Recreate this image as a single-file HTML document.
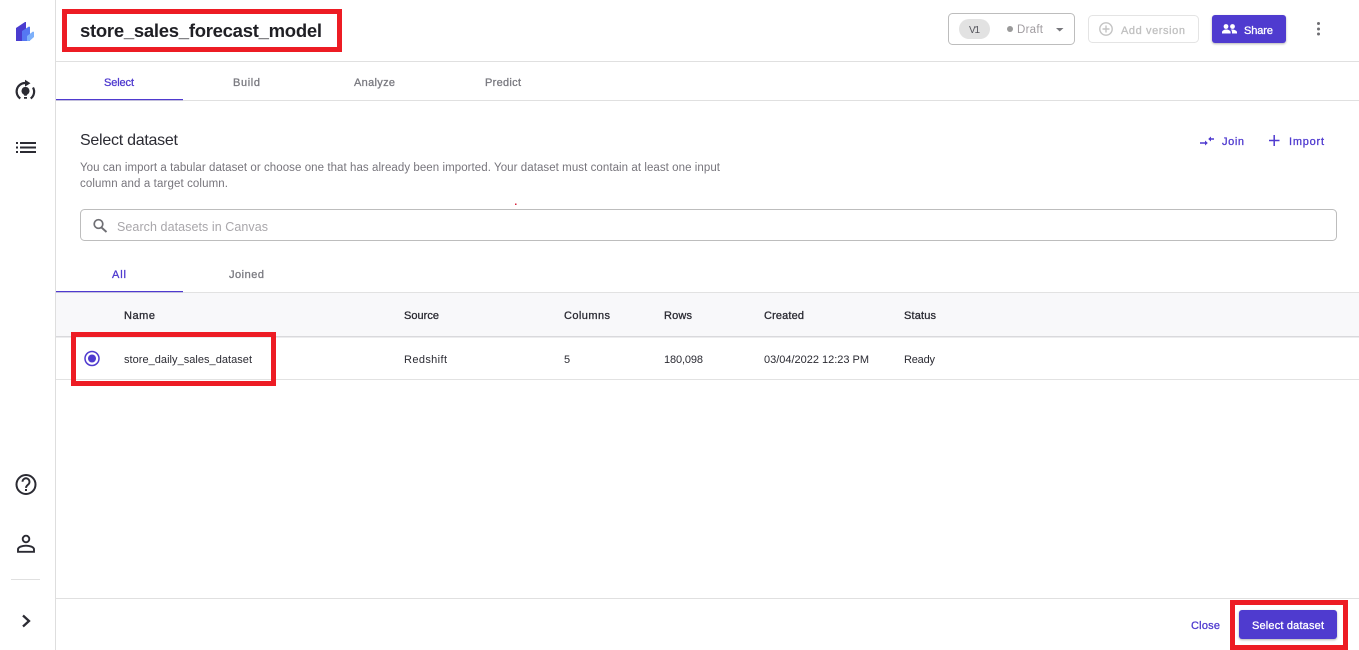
<!DOCTYPE html>
<html><head><meta charset="utf-8"><title>store_sales_forecast_model</title>
<style>
html,body{margin:0;padding:0;width:1359px;height:650px;overflow:hidden;background:#fff}
svg{display:block}
text{font-family:"Liberation Sans",sans-serif;font-size:11px;fill:#2b2b33}
.b{fill:#2b2b33;stroke:#2b2b33;stroke-width:.3px}
.p{fill:#4f3acf;stroke:#4f3acf;stroke-width:.3px}
.g{fill:#7a7a80;stroke:#7a7a80;stroke-width:.3px}
.w{fill:#fff;stroke:#fff;stroke-width:.3px}
.r{font-size:11.5px}
</style></head><body>
<svg width="1359" height="650" viewBox="0 0 1359 650" xmlns="http://www.w3.org/2000/svg">
<defs><filter id="s" x="-10%" y="-20%" width="120%" height="150%"><feDropShadow dx="0" dy="1" stdDeviation="1" flood-color="#000" flood-opacity=".3"/></filter></defs>
<rect width="1359" height="650" fill="#fff"/>
<!-- structure -->
<rect x="55" y="0" width="1" height="650" fill="#dedede"/>
<rect x="56" y="61" width="1303" height="1" fill="#e0e0e0"/>
<rect x="56" y="100" width="1303" height="1" fill="#e0e0e0"/>
<rect x="56" y="99" width="127" height="1.200" fill="#4f3acf"/>
<rect x="56" y="598" width="1303" height="1" fill="#e0e0e0"/>
<rect x="11" y="579" width="29" height="1" fill="#e0e0e0"/>
<!-- sidebar icons -->
<polygon points="16,28 25,22 26,22 26,41 16,41" fill="#4a3ccf"/>
<polygon points="22,31 29,26.500 30,27 30,41 22,41" fill="#5577f2"/>
<polygon points="27,36 33,31.500 34,32 34,37 29.500,41 27,41" fill="#7db0fa"/>
<g fill="none" stroke="#2b2b33" stroke-width="2.200">
<path d="M20.300 98.500A8.500 8.500 0 0 1 25 83"/>
<path d="M30.700 98.500A8.500 8.500 0 0 0 33 87.500"/>
</g>
<path d="M25 79.800l5.500 3.400L25 86.600z" fill="#2b2b33"/>
<path d="M25.500 87a3.900 3.900 0 0 1 2.300 7.100c-.6.500-1 1-1.100 1.700h-2.400c-.1-.7-.5-1.200-1.100-1.700a3.900 3.900 0 0 1 2.300-7.100zM24 97h3v1.800h-3z" fill="#2b2b33"/>
<g fill="#2b2b33">
<rect x="16" y="142" width="2" height="2"/><rect x="20" y="142" width="16" height="2"/>
<rect x="16" y="146.500" width="2" height="2"/><rect x="20" y="146.500" width="16" height="2"/>
<rect x="16" y="151" width="2" height="2"/><rect x="20" y="151" width="16" height="2"/>
</g>
<circle cx="26" cy="484.500" r="9.500" fill="none" stroke="#2b2b33" stroke-width="2"/>
<path d="M22.500 481.800a3.500 3.500 0 1 1 5.600 2.800c-1.300 1-2.100 1.600-2.100 3.300" fill="none" stroke="#2b2b33" stroke-width="1.900"/>
<rect x="25" y="489" width="2" height="2" fill="#2b2b33"/>
<circle cx="26" cy="539" r="3.300" fill="none" stroke="#2b2b33" stroke-width="1.900"/>
<path d="M18 551.800v-2.300c0-2.800 4.800-3.800 8-3.800s8 1 8 3.800v2.300z" fill="none" stroke="#2b2b33" stroke-width="1.900"/>
<path d="M23 615.500l6 5.500-6 5.500" fill="none" stroke="#2b2b33" stroke-width="2.300"/>
<!-- title -->
<text x="80" y="37" style="font-size:18.500px;font-weight:bold;fill:#1f1f24" textLength="242" lengthAdjust="spacing">store_sales_forecast_model</text>
<!-- header right -->
<rect x="948.500" y="13.500" width="126" height="31" rx="4" fill="#fff" stroke="#bdbdbd"/>
<rect x="959" y="19" width="31" height="20" rx="10" fill="#e2e2e2"/>
<text x="969" y="33" style="font-size:10px;fill:#55555c" textLength="11" lengthAdjust="spacing">V1</text>
<circle cx="1010" cy="29" r="3" fill="#9a9a9a"/>
<text x="1017" y="33" class="r" style="fill:#a09ca0" textLength="26" lengthAdjust="spacing">Draft</text>
<polygon points="1056,28 1063.500,28 1059.700,31.500" fill="#77777c"/>
<rect x="1088.500" y="15.500" width="110" height="27" rx="4" fill="#fff" stroke="#e4e4e4"/>
<circle cx="1106" cy="29" r="6.200" fill="none" stroke="#c4c4c4" stroke-width="1.400"/>
<path d="M1102.500 29h7M1106 25.500v7" stroke="#c4c4c4" stroke-width="1.400"/>
<text x="1121" y="34" style="fill:#c0c0c0;stroke:#c0c0c0;stroke-width:.3px" textLength="64" lengthAdjust="spacing">Add version</text>
<rect x="1212" y="15" width="74" height="28" rx="3" fill="#4f3acf" filter="url(#s)"/>
<g fill="#fff">
<circle cx="1226" cy="26.500" r="2.400"/><circle cx="1232.500" cy="26.500" r="2.400"/>
<path d="M1222 33.500v-1.300c0-1.700 2.500-2.700 4.300-2.700s4.300 1 4.300 2.700v1.300z"/>
<path d="M1232 29.500c2 0 5 1 5 2.700v1.300h-5v-1.300c0-1-.4-2-1.400-2.600z"/>
</g>
<text x="1244" y="34" class="w" textLength="29" lengthAdjust="spacing">Share</text>
<g fill="#6e6e72"><circle cx="1318.500" cy="23.500" r="1.500"/><circle cx="1318.500" cy="29" r="1.500"/><circle cx="1318.500" cy="34" r="1.500"/></g>
<!-- tabs -->
<text x="104" y="86" class="p" textLength="30" lengthAdjust="spacing">Select</text>
<text x="233" y="86" class="g" textLength="27" lengthAdjust="spacing">Build</text>
<text x="354" y="86" class="g" textLength="41" lengthAdjust="spacing">Analyze</text>
<text x="485" y="86" class="g" textLength="36" lengthAdjust="spacing">Predict</text>
<!-- heading -->
<text x="80" y="145" style="font-size:16px;fill:#2b2b33" textLength="98" lengthAdjust="spacing">Select dataset</text>
<text x="80" y="171" class="r" style="fill:#77757c" textLength="640" lengthAdjust="spacing">You can import a tabular dataset or choose one that has already been imported. Your dataset must contain at least one input</text>
<text x="80" y="187" class="r" style="fill:#77757c" textLength="148" lengthAdjust="spacing">column and a target column.</text>
<!-- join/import -->
<path d="M1200 143h5.500M1211 139h3" stroke="#4f3acf" stroke-width="1.500" fill="none"/>
<path d="M1205 140.500l2.800 2.500-2.800 2.500zM1211 136.500l-2.800 2.500 2.800 2.500z" fill="#4f3acf"/>
<text x="1222" y="145" class="p" textLength="22" lengthAdjust="spacing">Join</text>
<path d="M1269 140.500h10.500M1274.200 135v11" stroke="#4f3acf" stroke-width="1.500"/>
<text x="1289" y="145" class="p" textLength="35" lengthAdjust="spacing">Import</text>
<rect x="515" y="203.500" width="1.500" height="1.500" fill="#d8203a"/>
<!-- search -->
<rect x="80.500" y="209.500" width="1256" height="31" rx="4" fill="#fff" stroke="#bdbdbd"/>
<circle cx="98.500" cy="224" r="4.300" fill="none" stroke="#6f6f74" stroke-width="1.700"/>
<path d="M101.500 227.500l5 4.500" stroke="#6f6f74" stroke-width="1.900"/>
<text x="117" y="231" style="font-size:12.500px;fill:#a9a7ab" textLength="151" lengthAdjust="spacing">Search datasets in Canvas</text>
<!-- sub tabs -->
<text x="112" y="278" class="p" textLength="14" lengthAdjust="spacing">All</text>
<text x="229" y="278" class="g" textLength="35" lengthAdjust="spacing">Joined</text>
<rect x="56" y="293" width="1303" height="43" fill="#f8f8fa"/>
<rect x="56" y="292" width="1303" height="1" fill="#e2e2e2"/>
<rect x="56" y="291" width="127" height="1.200" fill="#4f3acf"/>
<rect x="56" y="336" width="1303" height="1.500" fill="#d9d9dc"/>
<rect x="56" y="379" width="1303" height="1" fill="#e2e2e2"/>
<!-- table head -->
<text x="124" y="319" class="b" textLength="31" lengthAdjust="spacing">Name</text>
<text x="404" y="319" class="b" textLength="35" lengthAdjust="spacing">Source</text>
<text x="564" y="319" class="b" textLength="46" lengthAdjust="spacing">Columns</text>
<text x="664" y="319" class="b" textLength="28" lengthAdjust="spacing">Rows</text>
<text x="764" y="319" class="b" textLength="40" lengthAdjust="spacing">Created</text>
<text x="904" y="319" class="b" textLength="32" lengthAdjust="spacing">Status</text>
<!-- row -->
<circle cx="92" cy="358.500" r="7" fill="#fff" stroke="#4f3acf" stroke-width="1.500"/>
<circle cx="92" cy="358.500" r="4" fill="#4f3acf"/>
<text x="124" y="363" textLength="128" lengthAdjust="spacing">store_daily_sales_dataset</text>
<text x="404" y="363" textLength="43" lengthAdjust="spacing">Redshift</text>
<text x="564" y="363" textLength="6.500" lengthAdjust="spacing">5</text>
<text x="664" y="363" textLength="39" lengthAdjust="spacing">180,098</text>
<text x="764" y="363" textLength="105" lengthAdjust="spacing">03/04/2022 12:23 PM</text>
<text x="904" y="363" textLength="31" lengthAdjust="spacing">Ready</text>
<!-- footer -->
<text x="1191" y="629" class="p" textLength="29" lengthAdjust="spacing">Close</text>
<rect x="1239" y="610" width="98" height="29" rx="3" fill="#4f3acf" filter="url(#s)"/>
<text x="1252" y="629" class="w" textLength="72" lengthAdjust="spacing">Select dataset</text>
<!-- annotation boxes -->
<g fill="none" stroke="#ed1c24" stroke-width="5">
<rect x="64.500" y="11.500" width="275" height="38"/>
<rect x="73.500" y="334.500" width="200" height="49"/>
<rect x="1232.500" y="602.500" width="113" height="45"/>
</g>
</svg>
</body></html>
